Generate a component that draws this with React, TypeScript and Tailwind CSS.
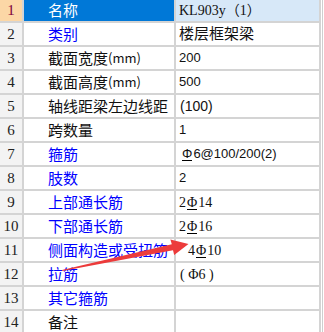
import React from 'react';

interface RowProps {
    no: number;
    name: React.ReactNode;
    value: React.ReactNode;
    blue?: boolean;
}

// 三级钢符号 (带下划线的Φ)
function Gang3() {
    return <span className='inline-block border-b border-black leading-[13px] mx-[1px]'>Φ</span>;
}

const mm = <span className='text-[13px]'>(mm)</span>;

const rows: RowProps[] = [
    { no: 1, name: '名称', value: <span className="font-['Liberation_Serif','Noto_Sans_CJK_SC',serif] text-[14px]">KL903y（1）</span> },
    { no: 2, name: '类别', value: <span className='text-[15px]'>楼层框架梁</span>, blue: true },
    { no: 3, name: <>截面宽度{mm}</>, value: '200' },
    { no: 4, name: <>截面高度{mm}</>, value: '500' },
    { no: 5, name: '轴线距梁左边线距', value: <span className='text-[14px] pl-[1px]'>(100)</span> },
    { no: 6, name: '跨数量', value: '1' },
    { no: 7, name: '箍筋', value: <span className='pl-[2px]'><Gang3 />6@100/200(2)</span>, blue: true },
    { no: 8, name: '肢数', value: '2', blue: true },
    { no: 9, name: '上部通长筋', value: <span className="font-['Liberation_Serif',serif] text-[14px]">2<Gang3 />14</span>, blue: true },
    { no: 10, name: '下部通长筋', value: <span className="font-['Liberation_Serif',serif] text-[14px]">2<Gang3 />16</span>, blue: true },
    { no: 11, name: '侧面构造或受扭筋', value: <span className="font-['Liberation_Serif',serif] text-[14px] pl-[9px]">4<Gang3 />10</span>, blue: true },
    { no: 12, name: '拉筋', value: <span className="font-['Liberation_Serif',serif] text-[14px] pl-[1px]">( Φ6 )</span>, blue: true },
    { no: 13, name: '其它箍筋', value: '', blue: true },
    { no: 14, name: '备注', value: '' },
];

export default function App() {
    return (
        <div className="relative w-[324px] h-[332px] overflow-hidden bg-white font-['Noto_Sans_CJK_SC',sans-serif]">
            <div className='w-[323px] border-r border-[#cfcfcf] pr-[1px]'>
                <div className='w-[321px] border-r-2 border-[#d4d4d4]'>
                    {rows.map((row) => {
                        const first = row.no === 1;
                        return (
                            <div key={row.no} className={`flex border-b-2 border-[#d4d4d4] ${first ? 'h-[23px]' : 'h-[24px]'}`}>
                                <div className={`w-[24px] shrink-0 border-r-2 border-[#d4d4d4] flex items-center justify-center font-['Liberation_Serif',serif] text-[15px] ${first ? 'bg-[#fcd7a6] text-[#80003a]' : 'bg-[#f3f3f3] text-[#222]'}`}>
                                    {row.no}
                                </div>
                                <div className={`w-[152px] shrink-0 border-r-2 border-[#d4d4d4] flex items-center pl-[24px] overflow-hidden whitespace-nowrap text-[15px] ${first ? 'bg-[#0078d7] text-white' : row.blue ? 'text-[#0000ff]' : 'text-[#111]'}`}>
                                    {row.name}
                                </div>
                                <div className={`flex-1 flex items-center pl-[3px] overflow-hidden whitespace-nowrap text-[13px] text-[#111] font-['Liberation_Sans','Noto_Sans_CJK_SC',sans-serif] ${first ? 'bg-[#d7e8f8]' : ''}`}>
                                    {row.value}
                                </div>
                            </div>
                        );
                    })}
                </div>
            </div>
            <svg className='absolute left-0 top-0 pointer-events-none' width='324' height='332' viewBox='0 0 324 332'>
                <polygon
                    points='62,270 171.8,244.2 170.4,239.6 188.5,244 174.2,255 173,250.2 62.3,270.9'
                    fill='#ec3b3b'
                />
            </svg>
        </div>
    );
}
